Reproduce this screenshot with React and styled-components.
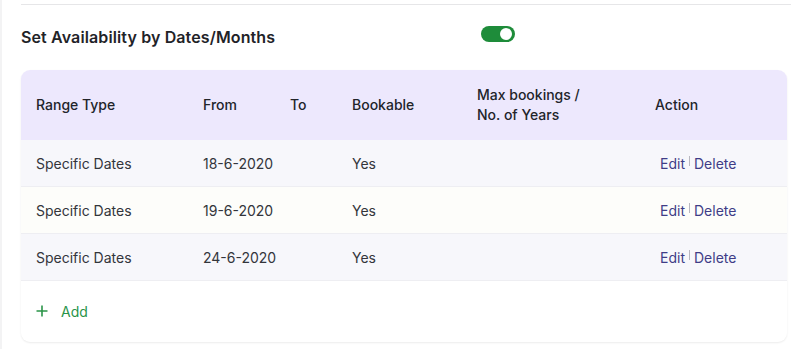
import styled, { createGlobalStyle } from "styled-components";

const GlobalStyle = createGlobalStyle`
  html, body {
    margin: 0;
    padding: 0;
    background: #ffffff;
    font-family: Inter, "Noto Sans", sans-serif;
  }
`;

const Page = styled.div`
  min-height: 349px;
  box-sizing: border-box;
  border-left: 2px solid #f3f3f4;
  padding: 4px 4px 0 19px;
`;

const Divider = styled.div`
  height: 1px;
  background: #e6e6e8;
  margin-right: -4px;
`;

const Heading = styled.div`
  display: flex;
  align-items: center;
  height: 64px;
  padding-bottom: 1px;
`;

const Title = styled.h2`
  margin: 0;
  width: 460px;
  font-size: 16px;
  font-weight: 600;
  letter-spacing: 0.12px;
  color: #1f2328;
  line-height: 20px;
  padding-top: 0;
`;

const Toggle = styled.div`
  width: 34px;
  height: 16px;
  border-radius: 8px;
  background: #1e8c3a;
  display: flex;
  align-items: center;
  justify-content: flex-end;
  padding: 0 3px;
  box-sizing: border-box;
  margin-top: -6px;
`;

const Knob = styled.span`
  width: 12px;
  height: 12px;
  border-radius: 50%;
  background: #ffffff;
`;

const Card = styled.div`
  width: 766px;
  border-radius: 9px;
  background: #ffffff;
  box-shadow: 0 1px 2px rgba(0, 0, 0, 0.08);
  overflow: hidden;
`;

const Row = styled.div`
  display: grid;
  grid-template-columns: 167px 87px 62px 125px 178px 1fr;
  align-items: center;
  padding-left: 15px;
  padding-top: ${(p) => (p.$head ? "0" : "1px")};
  height: ${(p) => (p.$head ? "70px" : "45px")};
  background: ${(p) => p.$bg};
  border-bottom: ${(p) => (p.$head ? "none" : "1px solid #eeeef2")};
  font-size: 14px;
  font-weight: ${(p) => (p.$head ? 500 : 400)};
  color: ${(p) => (p.$head ? "#22242a" : "#33353b")};
  line-height: 20px;
`;

const Actions = styled.div`
  display: flex;
  align-items: flex-start;
  padding-left: 5px;
  color: #3f3d87;
`;

const Sep = styled.span`
  width: 1px;
  height: 10px;
  background: #b8b8c0;
  margin: 2px 4px 0 4px;
`;

const AddRow = styled.div`
  display: flex;
  align-items: center;
  gap: 13px;
  height: 60px;
  padding-left: 15px;
  color: #2a9448;
  font-size: 14px;
  padding-bottom: 1px;
`;

const rows = [
  { date: "18-6-2020", bg: "#f7f7fb" },
  { date: "19-6-2020", bg: "#fdfdfa" },
  { date: "24-6-2020", bg: "#f7f7fb" },
];

export default function App() {
  return (
    <>
      <GlobalStyle />
      <Page>
        <Divider />
        <Heading>
          <Title>Set Availability by Dates/Months</Title>
          <Toggle>
            <Knob />
          </Toggle>
        </Heading>
        <Card>
          <Row $head $bg="#ede8fd">
            <span>Range Type</span>
            <span>From</span>
            <span>To</span>
            <span>Bookable</span>
            <span>
              Max bookings /<br />
              No. of Years
            </span>
            <span>Action</span>
          </Row>
          {rows.map((r) => (
            <Row key={r.date} $bg={r.bg}>
              <span>Specific Dates</span>
              <span>{r.date}</span>
              <span />
              <span>Yes</span>
              <span />
              <Actions>
                <span>Edit</span>
                <Sep />
                <span>Delete</span>
              </Actions>
            </Row>
          ))}
          <AddRow>
            <svg width="12" height="12" viewBox="0 0 12 12">
              <path d="M6 0.5v11M0.5 6h11" stroke="#2a9448" strokeWidth="1.6" fill="none" />
            </svg>
            <span>Add</span>
          </AddRow>
        </Card>
      </Page>
    </>
  );
}
